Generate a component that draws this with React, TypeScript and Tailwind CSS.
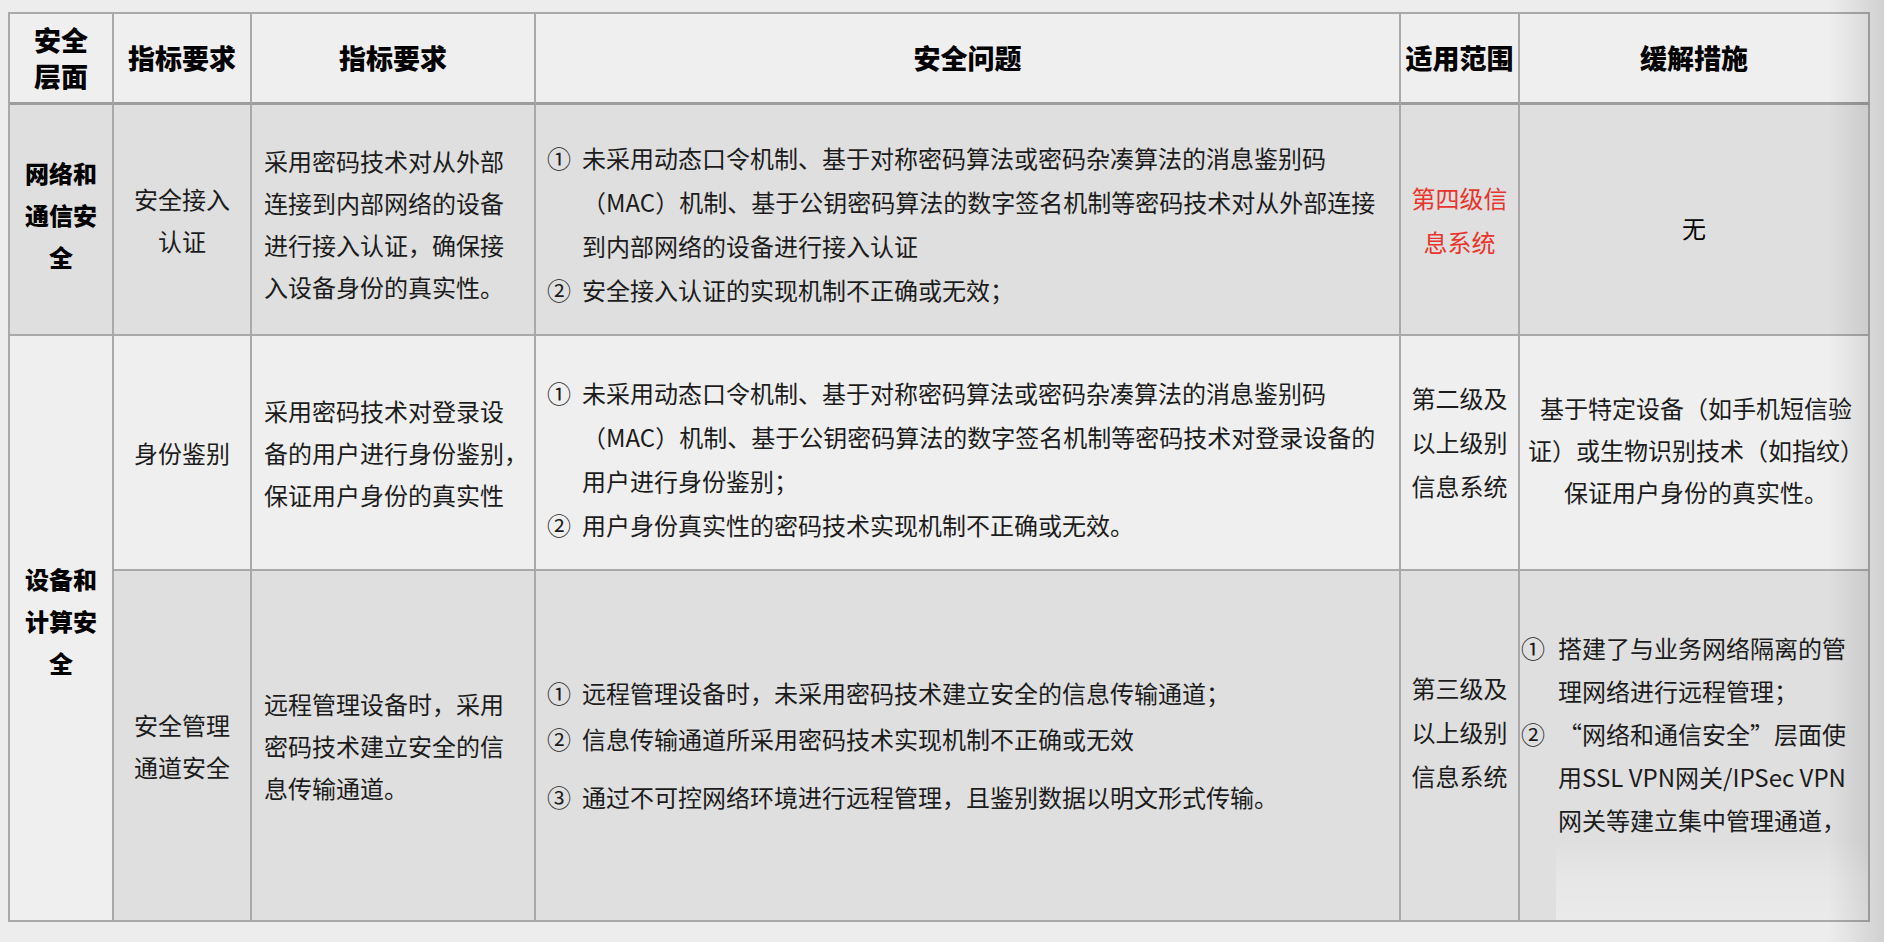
import React from "react";

const FONT = "[font-family:'Noto_Sans_CJK_SC','Microsoft_YaHei',sans-serif]";

function Item({ n, lines, className = "", markerW = "w-[35px]" }: { n: string; lines: string[]; className?: string; markerW?: string }) {
  return (
    <div className={"flex " + className}>
      <span className={"shrink-0 " + markerW}>{n}</span>
      <div>
        {lines.map((l, i) => (
          <div key={i} className="whitespace-nowrap">{l}</div>
        ))}
      </div>
    </div>
  );
}

function Lines({ lines }: { lines: string[] }) {
  return (
    <div>
      {lines.map((l, i) => (
        <div key={i} className="whitespace-nowrap">{l}</div>
      ))}
    </div>
  );
}

const cell = "border-r-2 border-b-2 border-[#a9a9a9] flex items-center min-w-0";
const head = cell + " border-b-[3px] border-b-[#9d9d9d] bg-[#efefef] justify-center text-center text-[27px] font-black leading-[36px] text-black";
const dark = "bg-[#dfdfdf]";
const light = "bg-[#efefef]";

export default function App() {
  return (
    <div className={"relative w-[1884px] h-[942px] overflow-hidden bg-[#ededed] pl-[8px] pt-[12px] text-[#1c1c1c] " + FONT}>
      <div className="grid grid-cols-[104px_138px_284px_865px_119px_350px] grid-rows-[91px_231px_235px_351px] w-[1862px] border-l-2 border-t-2 border-[#a9a9a9]">
        {/* header */}
        <div className={head}>
          <Lines lines={["安全", "层面"]} />
        </div>
        <div className={head}>指标要求</div>
        <div className={head}>指标要求</div>
        <div className={head}>安全问题</div>
        <div className={head}>适用范围</div>
        <div className={head}>缓解措施</div>

        {/* row 1 */}
        <div className={cell + " " + dark + " justify-center text-center text-[24px] font-black leading-[42px] text-black pb-[10px]"}>
          <Lines lines={["网络和", "通信安", "全"]} />
        </div>
        <div className={cell + " " + dark + " justify-center text-center text-[24px] leading-[42px]"}>
          <Lines lines={["安全接入", "认证"]} />
        </div>
        <div className={cell + " " + dark + " pl-[12px] text-[24px] leading-[42px] pt-[8px]"}>
          <Lines lines={["采用密码技术对从外部", "连接到内部网络的设备", "进行接入认证，确保接", "入设备身份的真实性。"]} />
        </div>
        <div className={cell + " " + dark + " pl-[11px] text-[24px] leading-[44px] pt-[8px]"}>
          <div>
            <Item
              n="①"
              lines={[
                "未采用动态口令机制、基于对称密码算法或密码杂凑算法的消息鉴别码",
                "（MAC）机制、基于公钥密码算法的数字签名机制等密码技术对从外部连接",
                "到内部网络的设备进行接入认证",
              ]}
            />
            <Item n="②" lines={["安全接入认证的实现机制不正确或无效；"]} />
          </div>
        </div>
        <div className={cell + " " + dark + " justify-center text-center text-[24px] leading-[44px] text-[#e8342c]"}>
          <Lines lines={["第四级信", "息系统"]} />
        </div>
        <div className={cell + " " + dark + " justify-center text-center text-[24px] leading-[42px] text-black pt-[16px]"}>
          无
        </div>

        {/* row 2 */}
        <div className={cell + " " + light + " row-span-2 justify-center text-center text-[24px] font-black leading-[42px] text-black pb-[14px]"}>
          <Lines lines={["设备和", "计算安", "全"]} />
        </div>
        <div className={cell + " " + light + " justify-center text-center text-[24px] leading-[42px]"}>
          身份鉴别
        </div>
        <div className={cell + " " + light + " pl-[12px] text-[24px] leading-[42px]"}>
          <Lines lines={["采用密码技术对登录设", "备的用户进行身份鉴别，", "保证用户身份的真实性"]} />
        </div>
        <div className={cell + " " + light + " pl-[11px] text-[24px] leading-[44px] pt-[12px]"}>
          <div>
            <Item
              n="①"
              lines={[
                "未采用动态口令机制、基于对称密码算法或密码杂凑算法的消息鉴别码",
                "（MAC）机制、基于公钥密码算法的数字签名机制等密码技术对登录设备的",
                "用户进行身份鉴别；",
              ]}
            />
            <Item n="②" lines={["用户身份真实性的密码技术实现机制不正确或无效。"]} />
          </div>
        </div>
        <div className={cell + " " + light + " justify-center text-center text-[24px] leading-[44px] pb-[22px]"}>
          <Lines lines={["第二级及", "以上级别", "信息系统"]} />
        </div>
        <div className={cell + " " + light + " justify-center text-center text-[24px] leading-[42px] pl-[4px] pb-[6px]"}>
          <Lines lines={["基于特定设备（如手机短信验", "证）或生物识别技术（如指纹）", "保证用户身份的真实性。"]} />
        </div>

        {/* row 3 */}
        <div className={cell + " " + dark + " justify-center text-center text-[24px] leading-[42px]"}>
          <Lines lines={["安全管理", "通道安全"]} />
        </div>
        <div className={cell + " " + dark + " pl-[12px] text-[24px] leading-[42px]"}>
          <Lines lines={["远程管理设备时，采用", "密码技术建立安全的信", "息传输通道。"]} />
        </div>
        <div className={cell + " " + dark + " pl-[11px] text-[24px] leading-[44px] pb-[2px]"}>
          <div>
            <Item n="①" lines={["远程管理设备时，未采用密码技术建立安全的信息传输通道；"]} className="mb-[2px]" />
            <Item n="②" lines={["信息传输通道所采用密码技术实现机制不正确或无效"]} className="mb-[14px]" />
            <Item n="③" lines={["通过不可控网络环境进行远程管理，且鉴别数据以明文形式传输。"]} />
          </div>
        </div>
        <div className={cell + " " + dark + " justify-center text-center text-[24px] leading-[44px] pb-[28px]"}>
          <Lines lines={["第三级及", "以上级别", "信息系统"]} />
        </div>
        <div className={cell + " " + dark + " relative pl-[1px] text-[24px] leading-[43px] pb-[24px]"}>
          <div>
            <Item n="①" markerW="w-[37px]" lines={["搭建了与业务网络隔离的管", "理网络进行远程管理；"]} />
            <Item n="②" markerW="w-[37px]" lines={["“网络和通信安全”层面使", "用SSL VPN网关/IPSec VPN", "网关等建立集中管理通道，"]} />
          </div>
          <div className="pointer-events-none absolute left-[36px] right-0 bottom-0 h-[80px] bg-linear-to-b from-transparent via-white/25 to-white/35" />
        </div>
      </div>

      {/* right-edge page shading */}
      <div className="pointer-events-none absolute top-0 right-0 h-full w-[56px] bg-linear-to-r from-transparent to-black/12" />
    </div>
  );
}
